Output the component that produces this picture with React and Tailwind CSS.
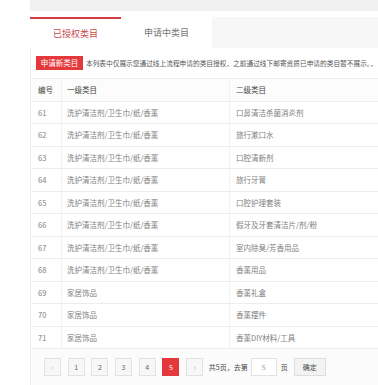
import React from "react";

const rows = [
  ["61", "洗护清洁剂/卫生巾/纸/香薰", "口鼻清洁杀菌消炎剂"],
  ["62", "洗护清洁剂/卫生巾/纸/香薰", "旅行漱口水"],
  ["63", "洗护清洁剂/卫生巾/纸/香薰", "口腔清新剂"],
  ["64", "洗护清洁剂/卫生巾/纸/香薰", "旅行牙膏"],
  ["65", "洗护清洁剂/卫生巾/纸/香薰", "口腔护理套装"],
  ["66", "洗护清洁剂/卫生巾/纸/香薰", "假牙及牙套清洁片/剂/粉"],
  ["67", "洗护清洁剂/卫生巾/纸/香薰", "室内除臭/芳香用品"],
  ["68", "洗护清洁剂/卫生巾/纸/香薰", "香薰用品"],
  ["69", "家居饰品", "香薰礼盒"],
  ["70", "家居饰品", "香薰摆件"],
  ["71", "家居饰品", "香薰DIY材料/工具"],
];

function Row({ a, b, c, header }) {
  return (
    <div
      className={`flex h-[22.5px] border-t border-[#ededed] ${
        header ? "text-[#444] bg-[#fcfcfc]" : "text-[#808080]"
      }`}
    >
      <div className="w-[30px] flex items-center pl-[7px]">{a}</div>
      <div className="w-[168px] flex items-center pl-[5px] border-l border-[#f1f1f1]">{b}</div>
      <div className="w-[300px] flex items-center pl-[6px] border-l border-[#f1f1f1]">{c}</div>
    </div>
  );
}

function PageBox({ children, active, dim }) {
  return (
    <div
      className={`w-[17px] h-[18px] flex items-center justify-center text-[7px] ${
        active
          ? "bg-[#e4393c] text-white border border-[#e4393c]"
          : "bg-[#f7f7f7] border border-[#e2e2e2] " + (dim ? "text-[#c8c8c8]" : "text-[#666]")
      }`}
    >
      {children}
    </div>
  );
}

export default function App() {
  return (
    <div
      className="w-[378px] h-[385px] overflow-hidden bg-white flex"
      style={{ fontFamily: '"Noto Sans CJK SC", "Noto Sans", sans-serif' }}
    >
      <div className="w-[30px] shrink-0" />
      <div className="w-[348px] shrink-0 flex flex-col overflow-hidden">
        <div className="h-[11px] bg-[#f1f1f1] shrink-0" />
        <div className="h-[6px] shrink-0" />
        <div className="h-[31px] flex shrink-0">
          <div className="w-[91px] border-t-[2px] border-[#d23b3f] bg-white flex items-center justify-center text-[9px] text-[#c8494c]">
            已授权类目
          </div>
          <div className="w-[91px] bg-white flex items-center justify-center text-[9px] text-[#777]">
            申请中类目
          </div>
          <div className="flex-1 bg-[#f7f7f7]" />
        </div>
        <div className="flex-1 border-l border-[#eeeeee] w-[520px] flex flex-col">
          <div className="h-[30px] flex items-center pl-[5px] shrink-0">
            <div className="w-[47px] h-[14px] bg-[#e4393c] text-white text-[7.5px] flex items-center justify-center shrink-0">
              申请新类目
            </div>
            <div className="ml-[3px] text-[6.7px] text-[#555] whitespace-nowrap">
              本列表中仅展示您通过线上流程申请的类目授权，之前通过线下邮寄资质已申请的类目暂不展示。，
            </div>
          </div>
          <div className="text-[7.5px]">
            <Row a="编号" b="一级类目" c="二级类目" header />
            {rows.map((r) => (
              <Row key={r[0]} a={r[0]} b={r[1]} c={r[2]} />
            ))}
          </div>
          <div className="flex-1 bg-[#fbfbfb] border-t border-[#ededed] pl-[13px] pt-[9px]">
            <div className="flex items-center gap-[6.7px]">
              <PageBox dim>
                <span className="text-[9px] leading-none">‹</span>
              </PageBox>
              <PageBox>1</PageBox>
              <PageBox>2</PageBox>
              <PageBox>3</PageBox>
              <PageBox>4</PageBox>
              <PageBox active>5</PageBox>
              <PageBox dim>
                <span className="text-[9px] leading-none">›</span>
              </PageBox>
              <div className="flex items-center text-[7px] text-[#444] whitespace-nowrap -ml-[1px]">
                <span>共5页，去第</span>
                <div className="ml-[3px] w-[26px] h-[18px] bg-white border border-[#e2e2e2] flex items-center justify-center text-[#999]">
                  5
                </div>
                <span className="ml-[4px]">页</span>
                <div className="ml-[6px] w-[32px] h-[18px] bg-[#f3f3f3] border border-[#dddddd] flex items-center justify-center text-[#444]">
                  确定
                </div>
              </div>
            </div>
          </div>
        </div>
      </div>
    </div>
  );
}
